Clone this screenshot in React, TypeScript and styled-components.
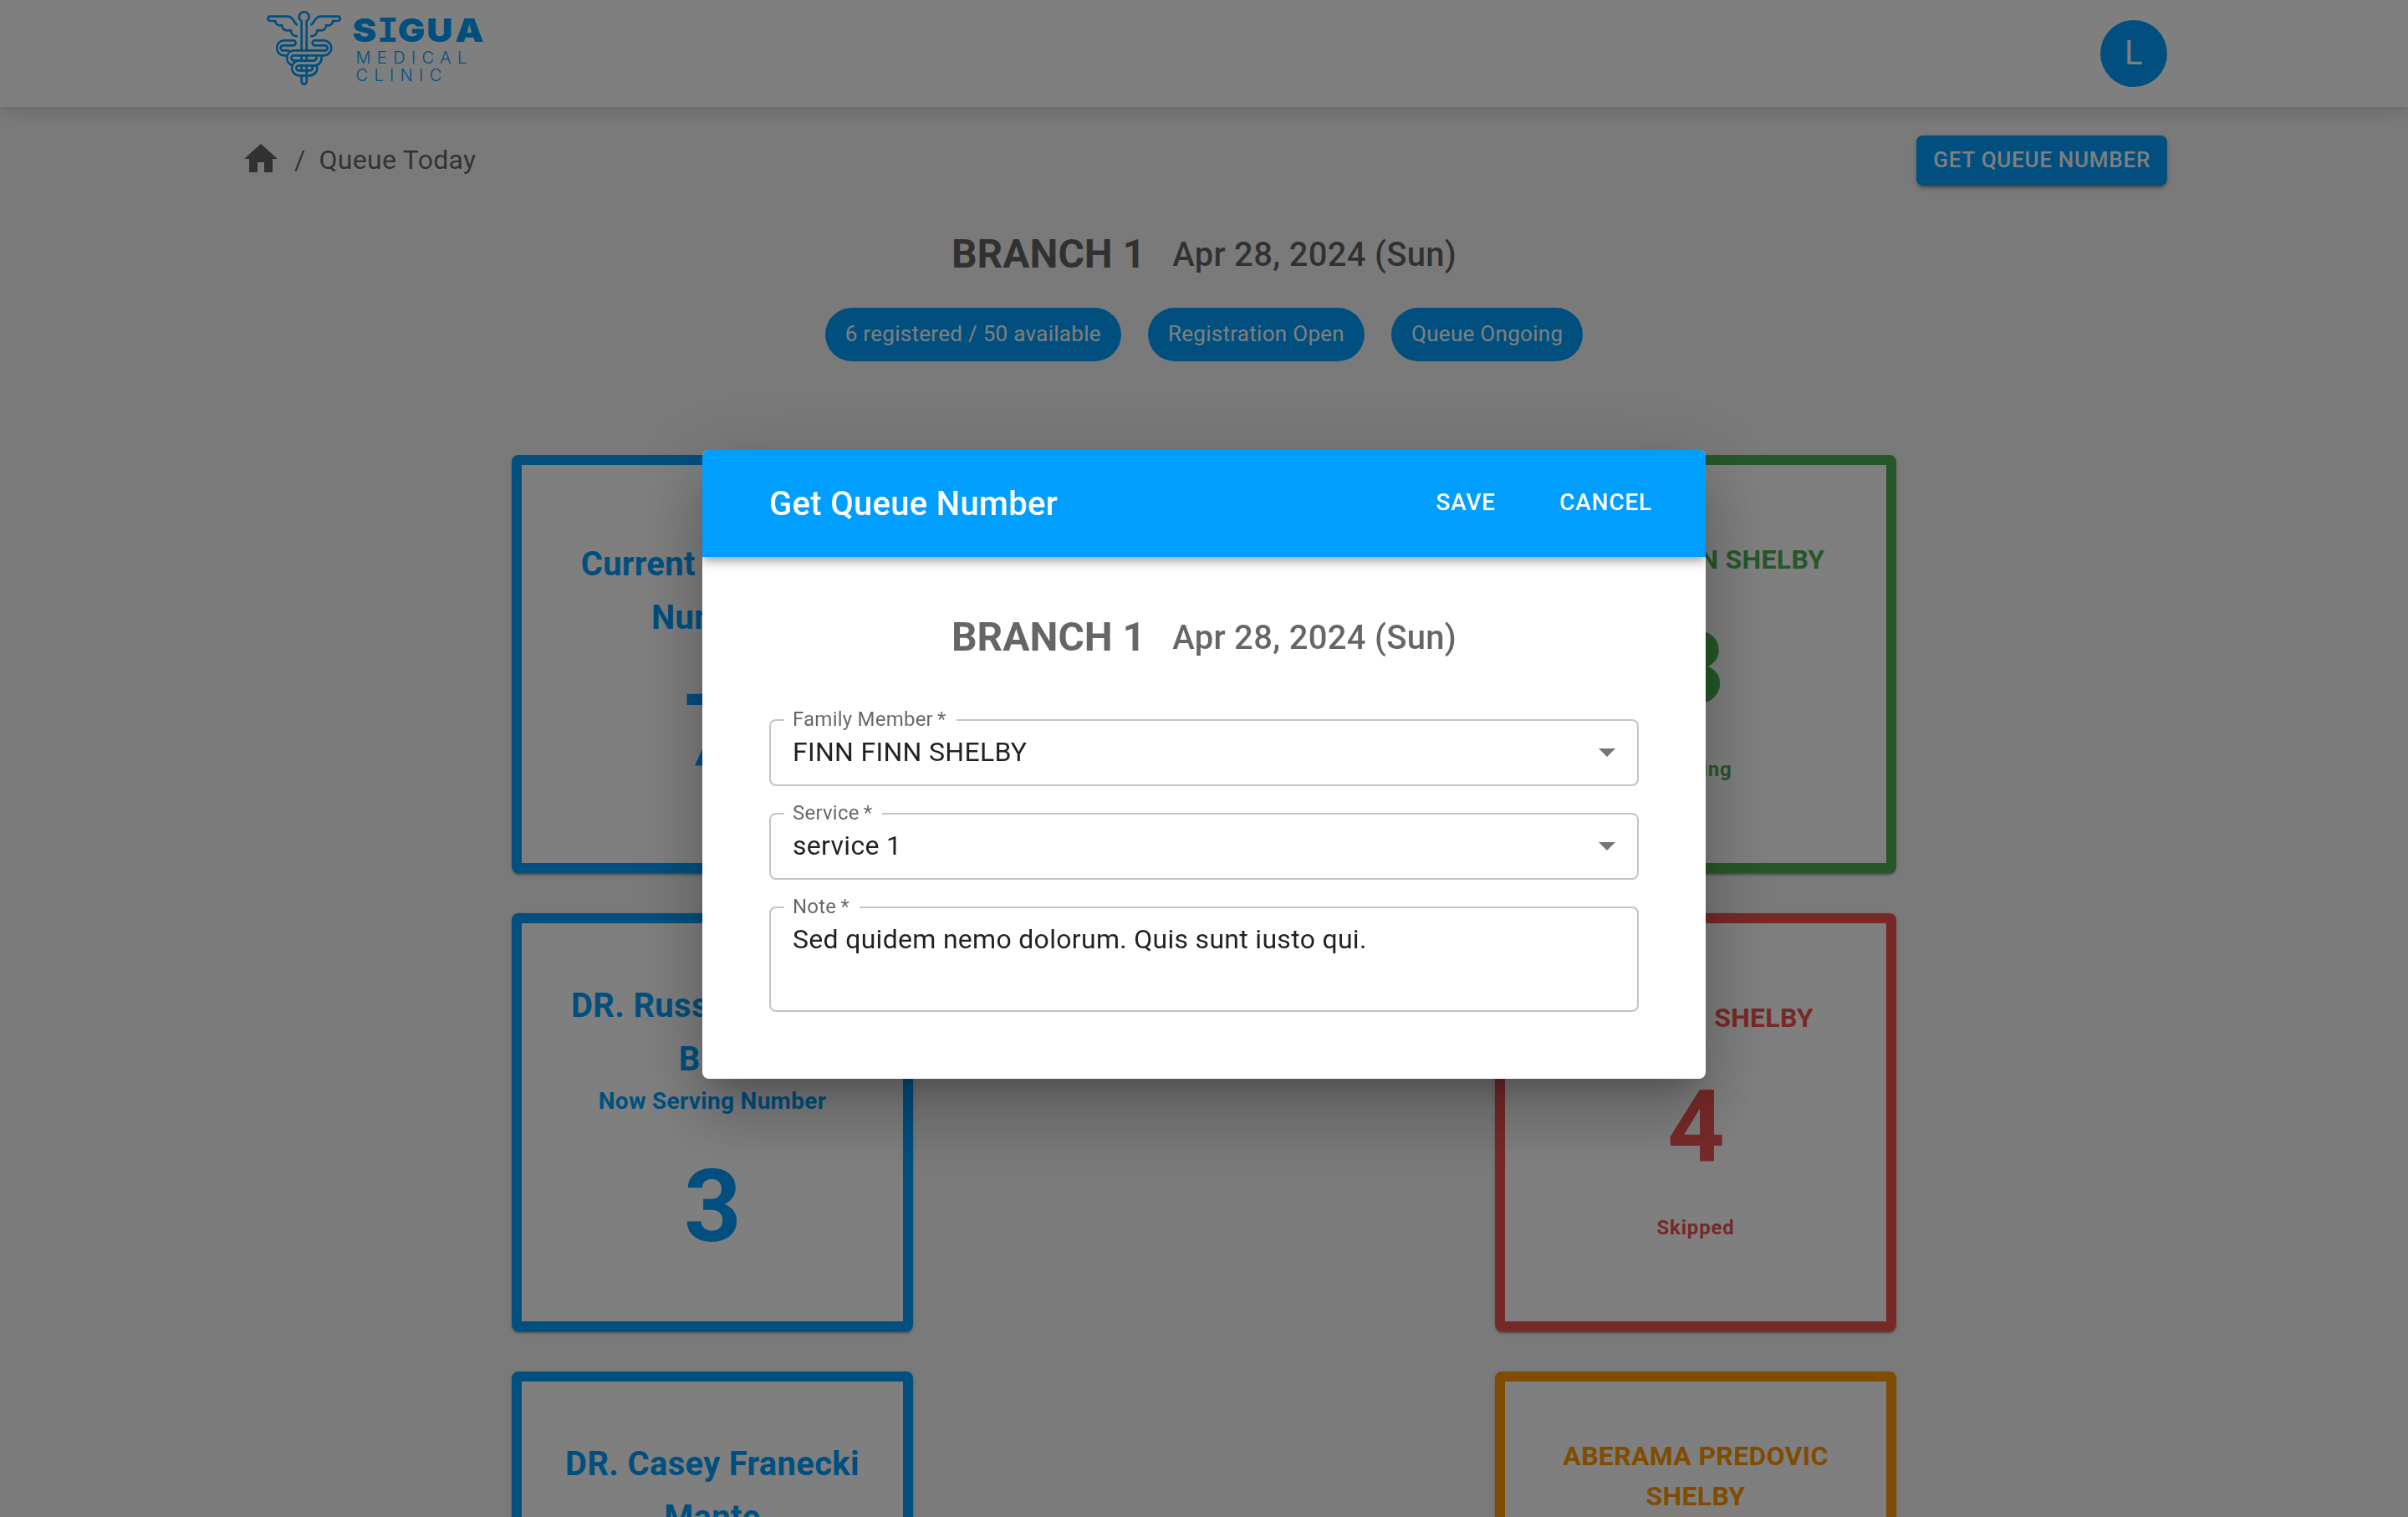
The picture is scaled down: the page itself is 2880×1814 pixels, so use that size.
import React from "react";
import styled, { createGlobalStyle } from "styled-components";

const PRIMARY = "#009fff";
const SUCCESS = "#4caf50";
const ERROR = "#ef5350";
const WARNING = "#ff9800";

const GlobalStyle = createGlobalStyle`
  *, *::before, *::after { box-sizing: border-box; }
  html, body { margin: 0; padding: 0; }
  body {
    font-family: Roboto, "Liberation Sans", sans-serif;
    font-size: 32px;
    line-height: 1.5;
    letter-spacing: 0.00938em;
    color: rgba(0, 0, 0, 0.87);
    background: #f5f5f5;
    overflow: hidden;
  }
`;

const Page = styled.div`
  height: 1814px;
  overflow: hidden;
`;

const TopBar = styled.header`
  position: relative;
  height: 128px;
  background: #fff;
  box-shadow: 0 4px 20px rgba(0, 0, 0, 0.17);
`;

const Container = styled.div`
  width: 2400px;
  margin: 0 auto;
  padding: 0 48px;
`;

const TopBarRow = styled(Container)`
  height: 100%;
  display: flex;
  align-items: center;
  justify-content: space-between;
`;

const LogoSvg = styled.svg`
  display: block;
  margin-left: 22px;
`;

const Avatar = styled.div`
  width: 80px;
  height: 80px;
  border-radius: 50%;
  display: flex;
  align-items: center;
  justify-content: center;
  background: ${PRIMARY};
  color: #fff;
  font-size: 40px;
  line-height: 1;
`;

const Crumbs = styled.nav`
  display: flex;
  align-items: center;
  gap: 16px;
  color: rgba(0, 0, 0, 0.6);
  svg { display: block; }
  span { padding-top: 2px; }
`;

const Toolbar = styled.div`
  display: flex;
  align-items: flex-start;
  justify-content: space-between;
  height: 62px;
  margin-top: 34px;
  ${Crumbs} { height: 48px; margin-top: 4px; }
`;

const Button = styled.button<{ $variant: "contained" | "text" }>`
  border: 0;
  margin: 0;
  font-family: inherit;
  font-weight: 500;
  line-height: 1.75;
  letter-spacing: 0.02857em;
  text-transform: uppercase;
  color: #fff;
  border-radius: 8px;
  ${(p) =>
    p.$variant === "contained"
      ? `
    height: 60px;
    font-size: 26px;
    padding: 7px 20px 8px;
    background: ${PRIMARY};
    box-shadow: 0 6px 2px -4px rgba(0,0,0,.2), 0 4px 4px 0 rgba(0,0,0,.14), 0 2px 10px 0 rgba(0,0,0,.12);`
      : `
    min-width: 128px;
    font-size: 28px;
    padding: 11px 16px 14px;
    background: transparent;`}
`;

const Heading = styled.div`
  display: flex;
  align-items: center;
  justify-content: center;
  gap: 32px;
  height: 64px;
  color: rgba(0, 0, 0, 0.6);
`;

const BranchName = styled.span`
  font-size: 48px;
  font-weight: 700;
  line-height: 64px;
  letter-spacing: 0;
`;

const BranchDate = styled.span`
  padding-top: 2px;
  font-size: 40px;
  font-weight: 500;
  line-height: 64px;
  letter-spacing: 0.0075em;
`;

const PageHeading = styled(Heading)`
  margin-top: 48px;
`;

const Chips = styled.div`
  display: flex;
  justify-content: center;
  gap: 32px;
  margin-top: 32px;
`;

const Chip = styled.span`
  height: 64px;
  padding: 0 24px 2px;
  border-radius: 32px;
  display: flex;
  align-items: center;
  background: ${PRIMARY};
  color: #fff;
  font-size: 26px;
  letter-spacing: 0.29px;
`;

const Board = styled.main`
  width: 1656px;
  margin: 112px auto 0;
  display: flex;
  justify-content: space-between;
`;

const Column = styled.section`
  display: flex;
  flex-direction: column;
  gap: 48px;
`;

const Card = styled.article<{ $color: string }>`
  width: 480px;
  height: 500px;
  flex: none;
  border: 12px solid ${(p) => p.$color};
  border-radius: 8px;
  background: #fff;
  color: ${(p) => p.$color};
  display: flex;
  flex-direction: column;
  align-items: center;
  justify-content: center;
  text-align: center;
  font-weight: 700;
  box-shadow: 0 4px 2px -2px rgba(0, 0, 0, 0.2), 0 2px 2px 0 rgba(0, 0, 0, 0.14),
    0 2px 6px 0 rgba(0, 0, 0, 0.12);
`;

const DoctorName = styled.div`
  padding-top: 2px;
  font-size: 40px;
  line-height: 64px;
  letter-spacing: 0.0075em;
  white-space: pre-line;
`;

const CardSubtitle = styled.div`
  padding-bottom: 4px;
  font-size: 28px;
  line-height: 36px;
  letter-spacing: 0.01071em;
`;

const QueueNumber = styled.div`
  margin-top: 32px;
  font-size: 120px;
  line-height: 144px;
  letter-spacing: -0.00833em;
`;

const PatientName = styled.div`
  padding-bottom: 3px;
  font-size: 32px;
  line-height: 48px;
  letter-spacing: 0.00938em;
  white-space: pre-line;
`;

const PatientStatus = styled.div`
  margin-top: 28px;
  padding-bottom: 3px;
  font-size: 24px;
  line-height: 40px;
  letter-spacing: 0.03333em;
`;

const Backdrop = styled.div`
  position: fixed;
  inset: 0;
  display: flex;
  align-items: center;
  justify-content: center;
  padding-top: 14px;
  background: rgba(0, 0, 0, 0.5);
`;

const Dialog = styled.div`
  width: 1200px;
  height: 752px;
  border-radius: 8px;
  overflow: hidden;
  background: #fff;
  box-shadow: 0 22px 30px -14px rgba(0, 0, 0, 0.2), 0 48px 76px 6px rgba(0, 0, 0, 0.14),
    0 18px 92px 16px rgba(0, 0, 0, 0.12);
`;

const DialogBar = styled.div`
  height: 128px;
  padding: 0 48px 0 80px;
  display: flex;
  align-items: center;
  gap: 32px;
  background: ${PRIMARY};
  color: #fff;
  box-shadow: 0 4px 8px -2px rgba(0, 0, 0, 0.2), 0 8px 10px 0 rgba(0, 0, 0, 0.14),
    0 2px 20px 0 rgba(0, 0, 0, 0.12);
`;

const DialogTitle = styled.h2`
  flex: 1;
  margin: 0;
  padding-top: 2px;
  font-size: 40px;
  font-weight: 500;
  line-height: 64px;
  letter-spacing: 0.0075em;
`;

const DialogBody = styled.div`
  padding: 64px 80px 80px;
`;

const Form = styled.form`
  display: flex;
  flex-direction: column;
  gap: 19px;
  margin-top: 53px;
`;

const Field = styled.fieldset<{ $height: number }>`
  min-width: 0;
  height: ${(p) => p.$height + 13}px;
  margin: 0;
  padding: 0 12px 0 16px;
  border: 2px solid rgba(0, 0, 0, 0.23);
  border-radius: 8px;
`;

const FieldLabel = styled.legend`
  height: 28px;
  padding: 0 12px 0 10px;
  font-size: 24px;
  line-height: 26px;
  letter-spacing: 0.00938em;
  color: rgba(0, 0, 0, 0.6);
`;

const FieldRow = styled.div`
  display: flex;
  align-items: center;
  justify-content: space-between;
  padding-left: 10px;
  line-height: 48px;
  svg { display: block; }
`;

const HomeIcon = () => (
  <svg width="48" height="48" viewBox="0 0 24 24" fill="currentColor">
    <path d="M10 20v-6h4v6h5v-8h3L12 3 2 12h3v8z" />
  </svg>
);

const ArrowDropDown = () => (
  <svg width="48" height="48" viewBox="0 0 24 24" fill="rgba(0,0,0,0.54)">
    <path d="M7 10l5 5 5-5z" />
  </svg>
);

const Logo = () => (
  <LogoSvg width="280" height="128" viewBox="0 0 280 128" fill={PRIMARY}>
    <g
      transform="translate(0 5) scale(0.33333)"
      fill="none"
      stroke={PRIMARY}
      strokeWidth="8"
      strokeLinecap="round"
      strokeLinejoin="round"
    >
      {/* staff */}
      <path d="M152 166V61a18 18 0 1 1 18 0V166M152 184v18M170 184v18M152 222v16M170 222v34M152 256v22a9 9 0 0 0 18 0v-22" />
      {/* wings */}
      <path d="M135 73C124 67 122 44 103 44H38c-9 0-9 15 2 16h18c0 10 7 16 15 16h9c0 12 8 18 16 18h16c0 12 8 21 21 21" />
      <path d="M187 73C198 67 200 44 219 44H284c9 0 9 15-2 16h-18c0 10-7 16-15 16h-9c0 12-8 18-16 18h-16c0 12-8 21-21 21" />
      {/* serpents */}
      <path d="M236 166a9 9 0 0 0 0-18H200a9 9 0 0 1 0-18H232a27 27 0 0 1 0 54H124a9 9 0 0 0 0 18H196a9 9 0 0 0 7-15" />
      <path d="M236 166H126a27 27 0 0 0-12 51M106 166H86a9 9 0 0 1 0-18H122a9 9 0 0 0 0-18H90a27 27 0 0 0 0 54H100" />
      <path d="M224 186c2 22-10 34-26 34H142a9 9 0 0 0 0 18H182a9 9 0 0 0 7-15M196 202H144a27 27 0 0 0 0 54H180a27 27 0 0 0 27-34" />
    </g>
    <g transform="translate(-310 0)">
      <text
        transform="translate(421.5 50) scale(1.12 1)"
        x="0 26.2 48.5 79.3 109.5"
        fontFamily="Inter, sans-serif"
        fontWeight="900"
        fontSize="38.5"
        letterSpacing="0"
      >
        S<tspan fontFamily="DejaVu Sans Mono" fontWeight="700">I</tspan>GUA
      </text>
      <text x="425.5" y="75.7" fontFamily="Inter, sans-serif" fontWeight="300" fontSize="20" textLength="133">
        MEDICAL
      </text>
      <text x="425.5" y="97.3" fontFamily="Inter, sans-serif" fontWeight="300" fontSize="20" textLength="103">
        CLINIC
      </text>
    </g>
  </LogoSvg>
);

const BranchHeading = () => (
  <>
    <BranchName>BRANCH 1</BranchName>
    <BranchDate>Apr 28, 2024 (Sun)</BranchDate>
  </>
);

const doctors = [
  { name: "Current Available\nNumber", number: 7 },
  { name: "DR. Russell Ripper\nBins", subtitle: "Now Serving Number", number: 3 },
  { name: "DR. Casey Franecki\nMante", subtitle: "Now Serving Number", number: 2 },
];

const patients = [
  { name: "EDWIN FINN SHELBY", number: 3, status: "Waiting", color: SUCCESS },
  { name: "FINN FINN SHELBY", number: 4, status: "Skipped", color: ERROR },
  { name: "ABERAMA PREDOVIC\nSHELBY", number: 5, status: "Waiting", color: WARNING },
];

const fields = [
  { label: "Family Member", value: "FINN FINN SHELBY", height: 80, select: true },
  { label: "Service", value: "service 1", height: 80, select: true },
  { label: "Note", value: "Sed quidem nemo dolorum. Quis sunt iusto qui.", height: 126, select: false },
];

export default function App() {
  return (
    <>
      <GlobalStyle />
      <Page>
        <TopBar>
          <TopBarRow>
            <Logo />
            <Avatar>L</Avatar>
          </TopBarRow>
        </TopBar>
        <Container>
          <Toolbar>
            <Crumbs>
              <HomeIcon />
              <span>/</span>
              <span>Queue Today</span>
            </Crumbs>
            <Button $variant="contained">Get Queue Number</Button>
          </Toolbar>
          <PageHeading>
            <BranchHeading />
          </PageHeading>
          <Chips>
            <Chip>6 registered / 50 available</Chip>
            <Chip>Registration Open</Chip>
            <Chip>Queue Ongoing</Chip>
          </Chips>
        </Container>
        <Board>
          <Column>
            {doctors.map((d) => (
              <Card key={d.name} $color={PRIMARY}>
                <DoctorName>{d.name}</DoctorName>
                {d.subtitle && <CardSubtitle>{d.subtitle}</CardSubtitle>}
                <QueueNumber>{d.number}</QueueNumber>
              </Card>
            ))}
          </Column>
          <Column>
            {patients.map((p) => (
              <Card key={p.name} $color={p.color}>
                <PatientName>{p.name}</PatientName>
                <QueueNumber>{p.number}</QueueNumber>
                <PatientStatus>{p.status}</PatientStatus>
              </Card>
            ))}
          </Column>
        </Board>
      </Page>
      <Backdrop>
        <Dialog role="dialog" aria-label="Get Queue Number">
          <DialogBar>
            <DialogTitle>Get Queue Number</DialogTitle>
            <Button $variant="text">Save</Button>
            <Button $variant="text">Cancel</Button>
          </DialogBar>
          <DialogBody>
            <Heading>
              <BranchHeading />
            </Heading>
            <Form>
              {fields.map((f) => (
                <Field key={f.label} $height={f.height}>
                  <FieldLabel>{f.label}&thinsp;*</FieldLabel>
                  <FieldRow>
                    {f.value}
                    {f.select && <ArrowDropDown />}
                  </FieldRow>
                </Field>
              ))}
            </Form>
          </DialogBody>
        </Dialog>
      </Backdrop>
    </>
  );
}
